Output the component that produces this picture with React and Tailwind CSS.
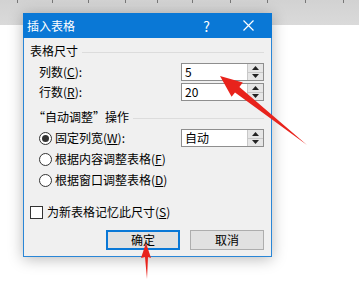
import React from "react";

const font = { fontFamily: '"Noto Sans CJK SC", "Noto Sans", sans-serif' };

function Spinner() {
  return (
    <div className="w-[16px] h-full flex flex-col border-l border-[#c8c8c8] bg-[#e6e6e6]">
      <div className="flex-1 flex items-center justify-center border-b border-[#c8c8c8]">
        <svg width="7" height="4" viewBox="0 0 7 4"><polygon points="3.5,0 7,4 0,4" fill="#222" /></svg>
      </div>
      <div className="flex-1 flex items-center justify-center">
        <svg width="7" height="4" viewBox="0 0 7 4"><polygon points="0,0 7,0 3.5,4" fill="#222" /></svg>
      </div>
    </div>
  );
}

function SpinBox({ value }) {
  return (
    <div className="w-[83px] h-[18px] flex border border-[#8e8e8e] bg-white">
      <div className="flex-1 flex items-center pl-[3px] text-[12px] leading-none text-black">{value}</div>
      <Spinner />
    </div>
  );
}

function Radio({ checked }) {
  return (
    <div className="w-[13px] h-[13px] rounded-full border border-[#333] bg-white flex items-center justify-center shrink-0">
      {checked && <div className="w-[7px] h-[7px] rounded-full bg-[#333]" />}
    </div>
  );
}

function Header({ children }) {
  return (
    <div className="h-[20px] flex items-center">
      <span className="text-[12px] leading-none text-black whitespace-nowrap">{children}</span>
      <div className="flex-1 h-px bg-[#dcdcdc] ml-[4px] mt-[2px]" />
    </div>
  );
}

export default function App() {
  const ticks = [17, 52, 88, 125, 157, 192, 230, 267, 305, 343];
  return (
    <div className="relative w-[359px] h-[295px] bg-white overflow-hidden" style={font}>
      <div className="relative h-[25px] bg-gradient-to-b from-[#d2d2d2] to-[#dadada]">
        {ticks.map((x) => (
          <div key={x} className="absolute top-0 w-px h-[3px] bg-[#777]" style={{ left: x }} />
        ))}
      </div>

      <div className="absolute left-[23px] top-[13px] w-[249px] h-[244px] flex flex-col shadow-[0_2px_14px_rgba(0,0,0,0.28)]">
        <div className="h-[25px] bg-[#0a78d6] flex items-center text-white">
          <span className="pl-[4px] text-[12px] leading-none">插入表格</span>
          <span className="ml-auto mr-[33px] text-[14px] leading-none">?</span>
          <svg className="mr-[18px]" width="11" height="11" viewBox="0 0 11 11">
            <path d="M0.5 0.5 L10.5 10.5 M10.5 0.5 L0.5 10.5" stroke="white" strokeWidth="1.2" />
          </svg>
        </div>
        <div className="flex-1 bg-[#f0f0f0] border-x border-b border-[#2a86d6] pl-[6px] pr-[7px] pt-[3px] flex flex-col text-black">
          <Header>表格尺寸</Header>
          <div className="h-[20px] mt-[1px] flex items-center">
            <span className="w-[151px] pl-[9px] text-[12px] leading-none">列数(<u>C</u>):</span>
            <SpinBox value="5" />
          </div>
          <div className="h-[20px] flex items-center">
            <span className="w-[151px] pl-[9px] text-[12px] leading-none">行数(<u>R</u>):</span>
            <SpinBox value="20" />
          </div>
          <div className="mt-[5px] pl-[3px]">
            <Header>“自动调整”操作</Header>
          </div>
          <div className="h-[20px] mt-[1px] flex items-center">
            <div className="w-[151px] pl-[9px] flex items-center gap-[3px]">
              <Radio checked />
              <span className="text-[12px] leading-none">固定列宽(<u>W</u>):</span>
            </div>
            <SpinBox value="自动" />
          </div>
          <div className="h-[20px] mt-[1px] pl-[9px] flex items-center gap-[3px]">
            <Radio />
            <span className="text-[12px] leading-none">根据内容调整表格(<u>F</u>)</span>
          </div>
          <div className="h-[20px] mt-[1px] pl-[9px] flex items-center gap-[3px]">
            <Radio />
            <span className="text-[12px] leading-none">根据窗口调整表格(<u>D</u>)</span>
          </div>
          <div className="h-[20px] mt-[12px] flex items-center gap-[4px]">
            <div className="w-[13px] h-[13px] border border-[#333] bg-white" />
            <span className="text-[12px] leading-none">为新表格记忆此尺寸(<u>S</u>)</span>
          </div>
          <div className="h-[20px] mt-[8px] flex justify-end gap-[10px]">
            <div className="w-[74px] h-full border-2 border-[#0a78d6] bg-[#e1e1e1] flex items-center justify-center text-[12px] leading-none">确定</div>
            <div className="w-[74px] h-full border border-[#adadad] bg-[#e1e1e1] flex items-center justify-center text-[12px] leading-none">取消</div>
          </div>
        </div>
      </div>

      <svg className="absolute inset-0 pointer-events-none" width="359" height="295" viewBox="0 0 359 295">
        <polygon points="220,76 242.8,82.6 239.4,87 307,145 235,92.4 231.6,96.8" fill="#e8231c" />
        <polygon points="146,243 151,258 148,257 147,279 145,257 141,258" fill="#e8231c" />
      </svg>
    </div>
  );
}
